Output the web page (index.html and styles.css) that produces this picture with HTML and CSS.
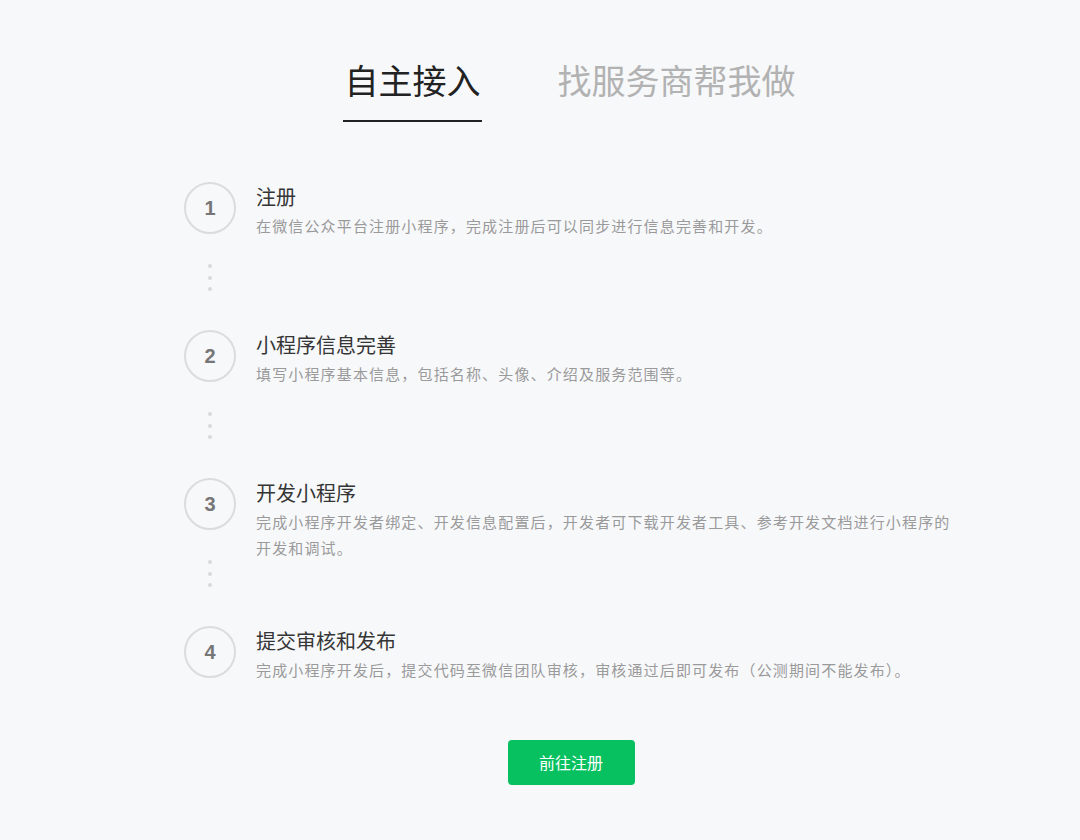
FILE: index.html
```html
<!DOCTYPE html>
<html lang="zh-CN">
<head>
<meta charset="utf-8">
<title>接入流程</title>
<link rel="stylesheet" href="styles.css">
</head>
<body>
<div class="page">
  <div class="tabs">
    <div class="tab tab-active">自主接入</div>
    <div class="tab">找服务商帮我做</div>
  </div>
  <ol class="steps">
    <li class="step">
      <div class="step-aside">
        <div class="step-num">1</div>
        <div class="step-dots"><i></i><i></i><i></i></div>
      </div>
      <div class="step-body">
        <div class="step-title">注册</div>
        <div class="step-desc">在微信公众平台注册小程序，完成注册后可以同步进行信息完善和开发。</div>
      </div>
    </li>
    <li class="step">
      <div class="step-aside">
        <div class="step-num">2</div>
        <div class="step-dots"><i></i><i></i><i></i></div>
      </div>
      <div class="step-body">
        <div class="step-title">小程序信息完善</div>
        <div class="step-desc">填写小程序基本信息，包括名称、头像、介绍及服务范围等。</div>
      </div>
    </li>
    <li class="step">
      <div class="step-aside">
        <div class="step-num">3</div>
        <div class="step-dots"><i></i><i></i><i></i></div>
      </div>
      <div class="step-body">
        <div class="step-title">开发小程序</div>
        <div class="step-desc">完成小程序开发者绑定、开发信息配置后，开发者可下载开发者工具、参考开发文档进行小程序的开发和调试。</div>
      </div>
    </li>
    <li class="step step-last">
      <div class="step-aside">
        <div class="step-num">4</div>
      </div>
      <div class="step-body">
        <div class="step-title">提交审核和发布</div>
        <div class="step-desc">完成小程序开发后，提交代码至微信团队审核，审核通过后即可发布（公测期间不能发布）。</div>
      </div>
    </li>
  </ol>
  <div class="actions">
    <a class="btn-primary" href="#">前往注册</a>
  </div>
</div>
</body>
</html>
```

FILE: styles.css
```css
html, body {
  margin: 0;
  padding: 0;
  background: #f7f8fa;
}
body {
  font-family: "Noto Sans CJK SC", "Noto Sans", sans-serif;
  color: #353535;
}
.page {
  width: 774px;
  margin-left: 184px;
  padding-top: 56px;
}
.tabs {
  display: flex;
  justify-content: center;
  gap: 76px;
  margin-left: -4px;
}
.tab {
  font-size: 34px;
  line-height: 48px;
  padding: 0 0 16px;
  color: #b2b2b2;
  border-bottom: 2px solid transparent;
}
.tab-active {
  color: #222;
  border-bottom-color: #222;
  padding: 0 1px 16px 2px;
}
.steps {
  list-style: none;
  margin: 60px 0 0 0;
  padding: 0;
}
.step {
  display: flex;
  gap: 20px;
}
.step-aside {
  width: 52px;
  flex: none;
  display: flex;
  flex-direction: column;
  align-items: center;
}
.step-num {
  width: 48px;
  height: 48px;
  border: 2px solid #dcdcdc;
  border-radius: 50%;
  display: flex;
  align-items: center;
  justify-content: center;
  font-family: "Liberation Sans", Arial, sans-serif;
  font-weight: bold;
  font-size: 20px;
  color: #767676;
}
.step-dots {
  height: 96px;
  box-sizing: border-box;
  padding-top: 30px;
  display: flex;
  flex-direction: column;
  align-items: center;
  gap: 7.5px;
}
.step-dots i {
  display: block;
  width: 4px;
  height: 4px;
  border-radius: 50%;
  background: #dadada;
}
.step-body {
  flex: 1;
  padding-top: 1px;
}
.step-title {
  font-size: 20px;
  line-height: 28px;
  color: #353535;
}
.step-desc {
  font-size: 15px;
  line-height: 26px;
  letter-spacing: 1.15px;
  color: #9a9a9a;
  margin-top: 2px;
}
.actions {
  display: flex;
  justify-content: center;
  margin-top: 57px;
}
.btn-primary {
  display: block;
  width: 127px;
  height: 45px;
  line-height: 45px;
  text-align: center;
  background: #07c160;
  color: #fff;
  font-size: 16px;
  border-radius: 4px;
  text-decoration: none;
}
```
